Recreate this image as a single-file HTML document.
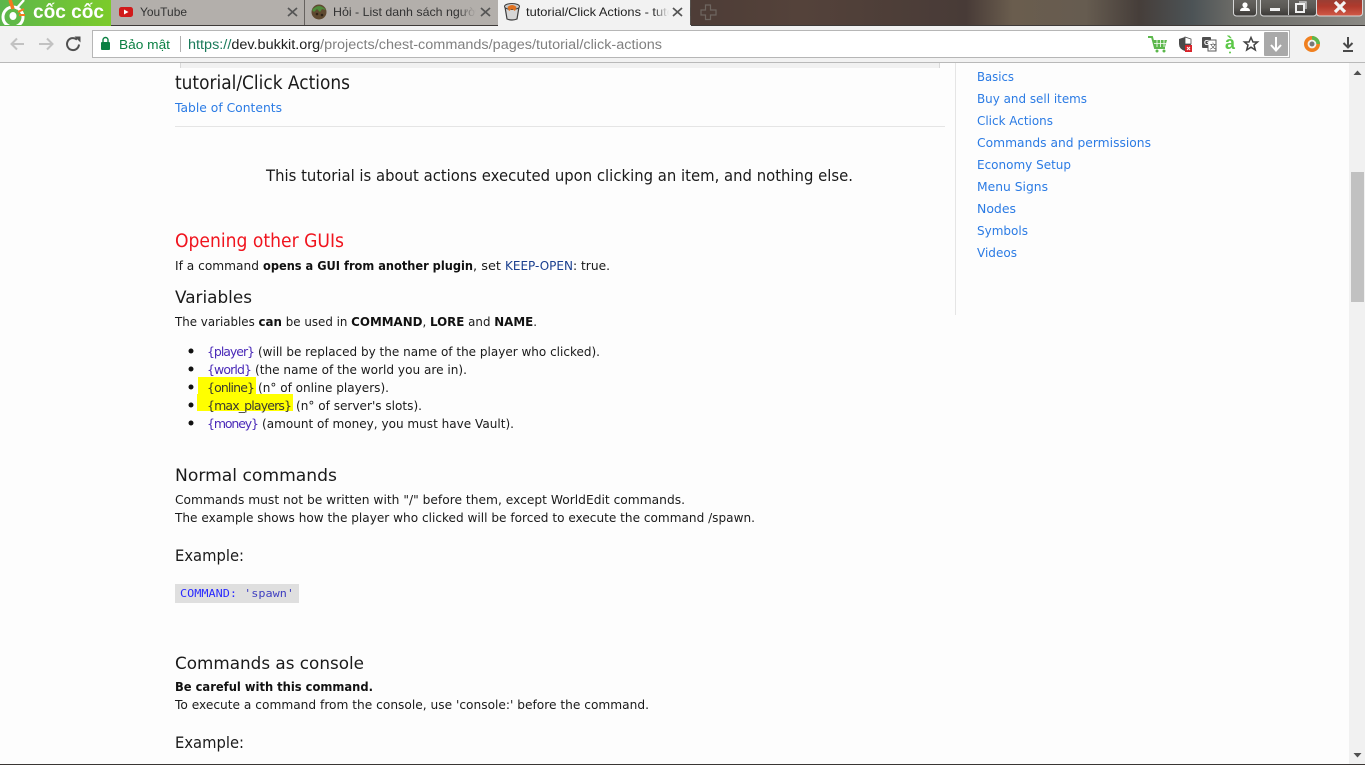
<!DOCTYPE html>
<html>
<head>
<meta charset="utf-8">
<title>tutorial/Click Actions</title>
<style>
html,body{margin:0;padding:0;width:1365px;height:765px;overflow:hidden;background:#fdfdfd}
svg{display:block;position:absolute;left:0;top:0}
text{font-family:"DejaVu Sans","Liberation Sans",sans-serif;white-space:pre}
.b{font-size:12.5px;fill:#1a1a1a}
.h{font-size:17px;fill:#1a1a1a}
.l{font-size:12.5px;fill:#2b7be4}
.s{font-weight:700;fill:#111}
.ui{font-family:"Liberation Sans","DejaVu Sans",sans-serif}
</style>
</head>
<body>
<svg width="1365" height="765" viewBox="0 0 1365 765" xmlns="http://www.w3.org/2000/svg">
<defs>
<linearGradient id="bar" gradientUnits="userSpaceOnUse" x1="700" x2="1365" y1="0" y2="0">
<stop offset="0" stop-color="#4e3d37"/><stop offset=".15" stop-color="#54423a"/><stop offset=".4" stop-color="#483b37"/><stop offset=".47" stop-color="#6a5d4e"/><stop offset=".58" stop-color="#665c50"/><stop offset=".66" stop-color="#463e3a"/><stop offset=".74" stop-color="#4c5356"/><stop offset=".8" stop-color="#6a6a66"/><stop offset="1" stop-color="#8a8984"/>
</linearGradient>
<linearGradient id="green" x1="0" x2="1" y1="0" y2="0"><stop offset="0" stop-color="#5cb64c"/><stop offset="1" stop-color="#7ccb2a"/></linearGradient>
<linearGradient id="red" x1="0" x2="0" y1="0" y2="1"><stop offset="0" stop-color="#8f4038"/><stop offset=".5" stop-color="#b03a2c"/><stop offset="1" stop-color="#d25a48"/></linearGradient>
<linearGradient id="btn" x1="0" x2="0" y1="0" y2="1"><stop offset="0" stop-color="#6a6864"/><stop offset=".55" stop-color="#5a5854"/><stop offset="1" stop-color="#3a3836"/></linearGradient>
<linearGradient id="fade1" x1="0" x2="1" y1="0" y2="0"><stop offset="0" stop-color="#b3afab" stop-opacity="0"/><stop offset="1" stop-color="#b3afab"/></linearGradient>
<linearGradient id="fade2" x1="0" x2="1" y1="0" y2="0"><stop offset="0" stop-color="#f2f2f2" stop-opacity="0"/><stop offset="1" stop-color="#f2f2f2"/></linearGradient>
<clipPath id="logoClip"><rect x="0" y="0" width="111" height="25"/></clipPath>
</defs>

<!-- page -->
<rect x="0" y="63" width="1365" height="702" fill="#fdfdfd"/>

<!-- title bar -->
<rect x="0" y="0" width="1365" height="26" fill="url(#bar)"/>
<rect x="0" y="25" width="1365" height="1" fill="#3e3a38"/>
<rect x="0" y="0" width="111" height="26" fill="url(#green)"/>
<rect x="111" y="0" width="193" height="25" fill="#b3afab"/>
<rect x="304" y="0" width="1" height="25" fill="#66625f"/>
<rect x="305" y="0" width="193" height="25" fill="#b3afab"/>
<rect x="498" y="0" width="193" height="26" fill="#f2f2f2"/>
<rect x="690" y="0" width="1" height="25" fill="#55504c"/>

<!-- coc coc logo -->
<g fill="none" clip-path="url(#logoClip)">
<circle cx="13" cy="17" r="10" stroke="#fff" stroke-width="3"/>
<ellipse cx="13" cy="16" rx="3.5" ry="4" fill="#fff"/>
<path d="M10 0L13 9" stroke="#f47b20" stroke-width="3.5"/>
<path d="M18 12L24 9M19 15L25 15" stroke="#f47b20" stroke-width="2"/>
<path d="M24 0L16 9" stroke="#fff" stroke-width="2.4"/>
</g>
<text class="ui" x="33" y="18" font-size="19" font-weight="700" fill="#fff" textLength="71" lengthAdjust="spacingAndGlyphs">cốc cốc</text>

<!-- tabs -->
<rect x="119" y="7" width="14" height="10" rx="2.5" fill="#d11a1a"/>
<path d="M124 9.5L128.5 12L124 14.5Z" fill="#fff"/>
<text class="ui" x="140" y="16" font-size="12" fill="#333" textLength="47" lengthAdjust="spacingAndGlyphs">YouTube</text>
<path d="M288 8L297 16M297 8L288 16" stroke="#555" stroke-width="1.7"/>

<circle cx="319" cy="12" r="7.5" fill="#5f4a30"/>
<path d="M312 10Q319 2 326 10L322 9L320 12L317 9L314 12Z" fill="#4f8a3a"/>
<circle cx="317" cy="14" r="1.3" fill="#2f2418"/><circle cx="322" cy="15" r="1.3" fill="#2f2418"/>
<text class="ui" x="333" y="16" font-size="12" fill="#333" textLength="146" lengthAdjust="spacingAndGlyphs">Hỏi - List danh sách người</text>
<rect x="458" y="2" width="18" height="20" fill="url(#fade1)"/>
<rect x="476" y="2" width="16" height="20" fill="#b3afab"/>
<path d="M481 8L490 16M490 8L481 16" stroke="#555" stroke-width="1.7"/>

<path d="M505 7L519 7L517 19Q512 21 507 19Z" fill="#d6d6d6" stroke="#3c3c3c" stroke-width="1.2"/>
<ellipse cx="512" cy="6.5" rx="7.5" ry="3" fill="#c9c9c9" stroke="#3c3c3c" stroke-width="1"/>
<path d="M507.5 7Q512 3 516.5 7L515 11L512 9L509 11Z" fill="#e0701e"/>
<text class="ui" x="526" y="16" font-size="12" fill="#222" textLength="165" lengthAdjust="spacingAndGlyphs">tutorial/Click Actions - tutorial</text>
<rect x="653" y="2" width="16" height="20" fill="url(#fade2)"/>
<rect x="669" y="2" width="21" height="20" fill="#f2f2f2"/>
<path d="M673 8L682 16M682 8L673 16" stroke="#555" stroke-width="1.7"/>

<path d="M705.5 5H710.5V10H716V15H710.5V19.5H705.5V15H701V10H705.5Z" fill="none" stroke="#6e6660" stroke-width="1.2"/>

<!-- window controls -->
<rect x="1233.5" y="-3" width="23" height="19" rx="3" fill="url(#btn)" stroke="#d8d8d8"/>
<circle cx="1245" cy="5" r="2.6" fill="#fff"/>
<path d="M1240 11Q1240 7.5 1245 7.5Q1250 7.5 1250 11Z" fill="#fff"/>
<rect x="1260.5" y="-3" width="56" height="19" rx="3" fill="url(#btn)" stroke="#d8d8d8"/>
<rect x="1288" y="0" width="1" height="15" fill="#c8c8c8"/>
<rect x="1270" y="8" width="10" height="3" fill="#f0f0f0"/>
<rect x="1296" y="4" width="8" height="8" fill="none" stroke="#f0f0f0" stroke-width="2"/>
<path d="M1299 2H1306V9" fill="none" stroke="#c8c8c8" stroke-width="1.4"/>
<rect x="1316.5" y="-3" width="46" height="19" rx="3" fill="url(#red)" stroke="#d8d8d8"/>
<path d="M1335 2L1345 12M1345 2L1335 12" stroke="#f4f4f4" stroke-width="3.2"/>

<!-- toolbar -->
<rect x="0" y="26" width="1365" height="36" fill="#f2f2f2"/>
<rect x="0" y="62" width="1365" height="1" fill="#b9b9b9"/>
<path d="M24 44H12M17 38.5L11.5 44L17 49.5" fill="none" stroke="#c2c2c2" stroke-width="2"/>
<path d="M39 44H52M47 38.5L52.5 44L47 49.5" fill="none" stroke="#c2c2c2" stroke-width="2"/>
<path d="M79 44.5A6 6 0 1 1 77 39.6" fill="none" stroke="#505050" stroke-width="2"/>
<path d="M74.5 36.5L80.5 36.5L80.5 42.5Z" fill="#505050"/>

<rect x="92.5" y="30.5" width="1197" height="27" fill="#fff" stroke="#b6b6b6"/>
<rect x="101" y="42" width="9" height="8" rx="1" fill="#0b8043"/>
<path d="M103 42V40A2.5 2.5 0 0 1 108 40V42" fill="none" stroke="#0b8043" stroke-width="1.4"/>
<text class="ui" x="119" y="49" font-size="13" fill="#0b8043" textLength="51" lengthAdjust="spacingAndGlyphs">Bảo mật</text>
<rect x="180" y="36" width="1" height="16" fill="#b0b0b0"/>
<text class="ui" x="188" y="49" font-size="13.5" fill="#808080" textLength="474" lengthAdjust="spacingAndGlyphs"><tspan fill="#1a7a5a">https://</tspan><tspan fill="#202020">dev.bukkit.org</tspan>/projects/chest-commands/pages/tutorial/click-actions</text>

<!-- extension icons -->
<path d="M1148 37H1152L1155 48H1165" fill="none" stroke="#5cb84c" stroke-width="2"/>
<path d="M1153 40H1167L1165 47H1155Z" fill="#5cb84c"/>
<path d="M1157 40V47M1160.5 40V47M1164 40V47M1154 43.5H1166" stroke="#fff" stroke-width=".8"/>
<circle cx="1157" cy="51" r="1.5" fill="#5cb84c"/><circle cx="1164" cy="51" r="1.5" fill="#5cb84c"/>

<path d="M1185 37L1191 39V44Q1191 49 1185 51Q1179 49 1179 44V39Z" fill="#4a4a4a"/>
<path d="M1185 37L1191 39V44H1185Z" fill="#fff" stroke="#4a4a4a" stroke-width=".8"/>
<rect x="1185" y="45" width="7" height="7" fill="#d8232a"/>
<path d="M1187 47L1190 50M1190 47L1187 50" stroke="#fff" stroke-width="1"/>

<rect x="1202" y="37" width="9" height="11" rx="1" fill="#4e4e4e"/>
<rect x="1208" y="40" width="8" height="11" fill="#fff" stroke="#5a5a5a" stroke-width="1"/>
<text class="ui" x="1204" y="45" font-size="7" font-weight="700" fill="#fff">G</text>
<text class="ui" x="1209.5" y="48.5" font-size="7" fill="#444" style="font-family:'Liberation Sans','Noto Sans CJK SC',sans-serif">文</text>

<text class="ui" x="1225" y="49" font-size="18" fill="#5cc848" font-weight="700">à</text>
<circle cx="1230" cy="52.5" r="1" fill="#5cc848"/>

<path d="M1251 37.5L1253 42H1257.5L1254 45L1255.3 50L1251 47.2L1246.7 50L1248 45L1244.5 42H1249Z" fill="none" stroke="#444" stroke-width="1.5"/>

<rect x="1264" y="32" width="24" height="24" rx="1" fill="#a9a9a9"/>
<path d="M1276 37V50M1271 45L1276 50.5L1281 45" fill="none" stroke="#fff" stroke-width="2"/>

<circle cx="1312" cy="44" r="6.2" fill="none" stroke="#f08020" stroke-width="3.6"/>
<path d="M1312 37.8A6.2 6.2 0 0 1 1318.2 44" fill="none" stroke="#5cb84c" stroke-width="3.6"/>
<circle cx="1312" cy="44" r="2.5" fill="#777"/>

<path d="M1348 37V47M1343.5 43L1348 47.5L1352.5 43" fill="none" stroke="#4a4a4a" stroke-width="2"/>
<rect x="1343" y="50" width="10" height="2" fill="#4a4a4a"/>

<!-- top grey strip -->
<rect x="180" y="63" width="760" height="5" fill="#f1f1f1"/>
<rect x="180" y="63" width="1" height="5" fill="#d8d8d8"/>
<rect x="939" y="63" width="1" height="5" fill="#d8d8d8"/>

<!-- sidebar -->
<rect x="955" y="63" width="1" height="252" fill="#e5e5e5"/>
<text class="l" x="977" y="81" textLength="37" lengthAdjust="spacingAndGlyphs">Basics</text>
<text class="l" x="977" y="103" textLength="110" lengthAdjust="spacingAndGlyphs">Buy and sell items</text>
<text class="l" x="977" y="125" textLength="76" lengthAdjust="spacingAndGlyphs">Click Actions</text>
<text class="l" x="977" y="147" textLength="174" lengthAdjust="spacingAndGlyphs">Commands and permissions</text>
<text class="l" x="977" y="169" textLength="94" lengthAdjust="spacingAndGlyphs">Economy Setup</text>
<text class="l" x="977" y="191" textLength="71" lengthAdjust="spacingAndGlyphs">Menu Signs</text>
<text class="l" x="977" y="213" textLength="39" lengthAdjust="spacingAndGlyphs">Nodes</text>
<text class="l" x="977" y="235" textLength="51" lengthAdjust="spacingAndGlyphs">Symbols</text>
<text class="l" x="977" y="257" textLength="40" lengthAdjust="spacingAndGlyphs">Videos</text>

<!-- scrollbar -->
<rect x="1349" y="63" width="16" height="702" fill="#f1f1f1"/>
<rect x="1351" y="172" width="13" height="130" fill="#c1c1c1"/>
<path d="M1353.5 75L1357.5 70.5L1361.5 75Z" fill="#505050"/>
<path d="M1353.5 753L1357.5 757.5L1361.5 753Z" fill="#505050"/>
<rect x="0" y="764" width="1365" height="1" fill="#3a3634"/>

<!-- main content -->
<text class="h" x="175" y="89" textLength="175" lengthAdjust="spacingAndGlyphs" style="font-size:18.5px">tutorial/Click Actions</text>
<text class="l" x="175" y="112" textLength="107" lengthAdjust="spacingAndGlyphs">Table of Contents</text>
<rect x="175" y="126" width="770" height="1" fill="#e5e5e5"/>

<text x="266" y="181" fill="#1a1a1a" style="font-size:16px" textLength="587" lengthAdjust="spacingAndGlyphs">This tutorial is about actions executed upon clicking an item, and nothing else.</text>

<text x="175" y="247" fill="#f0141e" style="font-size:18.5px" textLength="169" lengthAdjust="spacingAndGlyphs">Opening other GUIs</text>
<text class="b" x="175" y="270" textLength="84" lengthAdjust="spacingAndGlyphs">If a command</text>
<text class="b s" x="263" y="270" textLength="210" lengthAdjust="spacingAndGlyphs">opens a GUI from another plugin</text>
<text class="b" x="473" y="270" textLength="28" lengthAdjust="spacingAndGlyphs">, set</text>
<text class="b" x="505" y="270" style="fill:#1a3f8f" textLength="68" lengthAdjust="spacingAndGlyphs">KEEP-OPEN</text>
<text class="b" x="573" y="270" textLength="37" lengthAdjust="spacingAndGlyphs">: true.</text>

<text class="h" x="175" y="303" textLength="77" lengthAdjust="spacingAndGlyphs">Variables</text>
<text class="b" x="175" y="326" textLength="362" lengthAdjust="spacingAndGlyphs">The variables <tspan class="s">can</tspan> be used in <tspan class="s">COMMAND</tspan>, <tspan class="s">LORE</tspan> and <tspan class="s">NAME</tspan>.</text>

<rect x="198" y="377" width="58" height="17" fill="#ffff00"/>
<rect x="197" y="394" width="96" height="17" fill="#ffff00"/>
<circle cx="191" cy="351" r="2.5" fill="#111"/>
<circle cx="191" cy="369" r="2.5" fill="#111"/>
<circle cx="191" cy="387" r="2.5" fill="#111"/>
<circle cx="191" cy="405" r="2.5" fill="#111"/>
<circle cx="191" cy="423" r="2.5" fill="#111"/>
<text class="b" x="207" y="356" style="fill:#4a2ab8" textLength="48" lengthAdjust="spacing">{player}</text>
<text class="b" x="258" y="356" textLength="342" lengthAdjust="spacingAndGlyphs">(will be replaced by the name of the player who clicked).</text>
<text class="b" x="207" y="374" style="fill:#4a2ab8" textLength="45" lengthAdjust="spacing">{world}</text>
<text class="b" x="255" y="374" textLength="212" lengthAdjust="spacingAndGlyphs">(the name of the world you are in).</text>
<text class="b" x="207" y="392" style="fill:#3a3a30" textLength="48" lengthAdjust="spacing">{online}</text>
<text class="b" x="258" y="392" textLength="131" lengthAdjust="spacingAndGlyphs">(n° of online players).</text>
<text class="b" x="207" y="410" style="fill:#3a3a30" textLength="85" lengthAdjust="spacing">{max_players}</text>
<text class="b" x="296" y="410" textLength="126" lengthAdjust="spacingAndGlyphs">(n° of server's slots).</text>
<text class="b" x="207" y="428" style="fill:#4a2ab8" textLength="52" lengthAdjust="spacing">{money}</text>
<text class="b" x="262" y="428" textLength="252" lengthAdjust="spacingAndGlyphs">(amount of money, you must have Vault).</text>

<text class="h" x="175" y="481" textLength="162" lengthAdjust="spacingAndGlyphs">Normal commands</text>
<text class="b" x="175" y="504" textLength="510" lengthAdjust="spacingAndGlyphs">Commands must not be written with "/" before them, except WorldEdit commands.</text>
<text class="b" x="175" y="522" textLength="580" lengthAdjust="spacingAndGlyphs">The example shows how the player who clicked will be forced to execute the command /spawn.</text>

<text x="175" y="561" fill="#1a1a1a" style="font-size:16px" textLength="69" lengthAdjust="spacingAndGlyphs">Example:</text>

<rect x="175" y="584" width="124" height="19" fill="#dfdfdf"/>
<text x="180" y="597" fill="#2a2aff" style="font-family:'DejaVu Sans Mono','Liberation Mono',monospace;font-size:11px" textLength="114" lengthAdjust="spacingAndGlyphs">COMMAND: <tspan fill="#3f3fc0">'spawn'</tspan></text>

<text class="h" x="175" y="669" textLength="189" lengthAdjust="spacingAndGlyphs">Commands as console</text>
<text class="b s" x="175" y="691" textLength="198" lengthAdjust="spacingAndGlyphs">Be careful with this command.</text>
<text class="b" x="175" y="709" textLength="474" lengthAdjust="spacingAndGlyphs">To execute a command from the console, use 'console:' before the command.</text>

<text x="175" y="748" fill="#1a1a1a" style="font-size:16px" textLength="69" lengthAdjust="spacingAndGlyphs">Example:</text>
</svg>
</body>
</html>
